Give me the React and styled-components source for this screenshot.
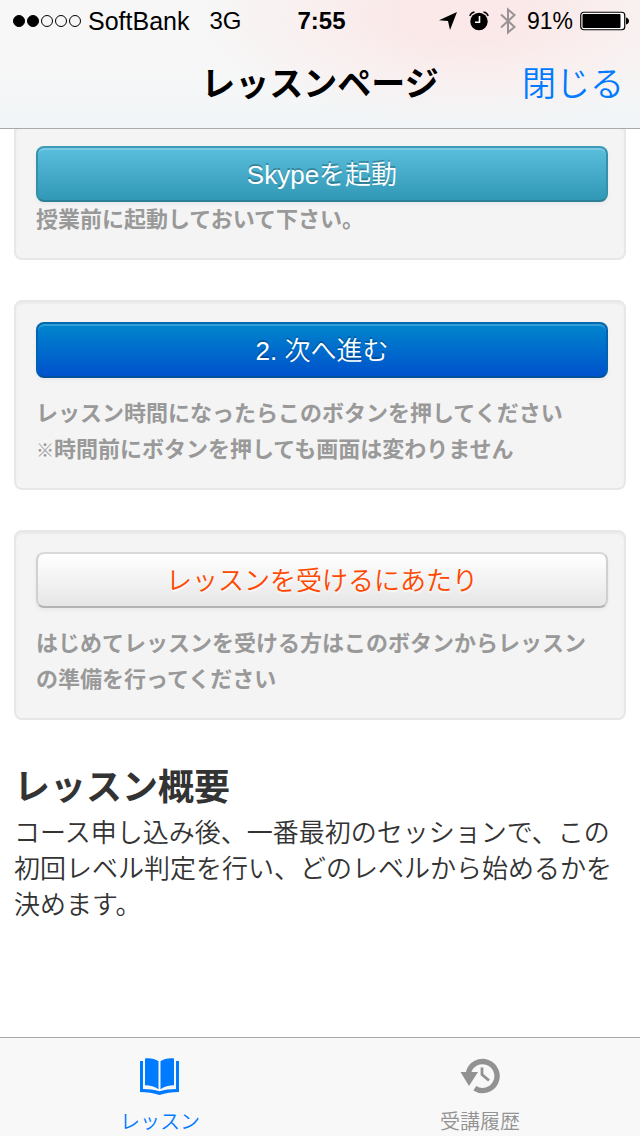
import React, { useState } from "react";
import styled, { createGlobalStyle, css } from "styled-components";

const TABS = [
  { id: "lesson", label: "レッスン", Icon: BookIcon },
  { id: "history", label: "受講履歴", Icon: HistoryIcon },
];

const SIGNAL = [true, true, false, false, false];

function BookIcon() {
  return (
    <svg width="40" height="38" viewBox="0 0 40 38" fill="currentColor" aria-hidden="true">
      <path d="M5 0.500C10 -0.300 15 1 18.500 3.200V31.200C15 28.700 10 27.200 5 27.200Z" />
      <path d="M34 0.500C29 -0.300 24 1 20.500 3.200V31.200C24 28.700 29 27.200 34 27.200Z" />
      <path d="M0 3H3V31C9 31 14.500 31.700 19.500 33.200C24.500 31.700 30 31 36 31V3H39V34C32 34 25.500 35 19.500 37C13.500 35 7 34 0 34Z" />
    </svg>
  );
}

function HistoryIcon() {
  return (
    <svg width="40" height="38" viewBox="0 0 40 38" fill="none" stroke="currentColor" aria-hidden="true">
      <path d="M8.500 14.500A14.500 14.500 0 1 1 14.800 30.300" strokeWidth="5.400" />
      <path d="M0.500 14H18L9 28Z" fill="currentColor" stroke="none" />
      <path d="M22 9.500V16.500L29 22.500" strokeWidth="2.800" />
    </svg>
  );
}

const App = () => {
  const [tab, setTab] = useState("lesson");
  return (
    <Page lang="ja">
      <GlobalStyle />
      <Header>
        <StatusBar>
          <StatusGroup>
            <Signal>
              {SIGNAL.map((on, i) => (
                <Dot key={i} $on={on} />
              ))}
            </Signal>
            <Carrier>SoftBank</Carrier>
            <span>3G</span>
          </StatusGroup>
          <Time>7:55</Time>
          <StatusIcons>
            <svg width="20" height="20" viewBox="0 0 20 20" aria-hidden="true">
              <path d="M19 1L12 19L10 10L1 9.300Z" />
            </svg>
            <svg width="20" height="20" viewBox="0 0 20 20" aria-hidden="true">
              <circle cx="10" cy="10.500" r="8.700" />
              <path d="M0.800 5Q1.800 1.700 5.500 1M19.200 5Q18.200 1.700 14.500 1" fill="none" stroke="#000" strokeWidth="1.300" />
              <path d="M10.500 5V11.300H6" fill="none" stroke="#fff" strokeWidth="1.600" />
            </svg>
            <svg width="16" height="28" viewBox="0 0 16 28" fill="none" stroke="#999294" strokeWidth="2" aria-hidden="true">
              <path d="M1 7.500L14.500 20L8 25.500V2.500L14.500 8L1 20.500" />
            </svg>
            <Percent>91%</Percent>
            <svg width="50" height="20" viewBox="0 0 50 20" aria-hidden="true">
              <rect x="0.750" y="1.250" width="44" height="17.500" rx="3" fill="#fff" stroke="#000" strokeWidth="1.200" />
              <rect x="2.500" y="3" width="38" height="14" rx="1" />
              <path d="M46 6.500Q49 7.500 49 10Q49 12.500 46 13.500Z" />
            </svg>
          </StatusIcons>
        </StatusBar>
        <NavBar>
          <Title>レッスンページ</Title>
          <CloseButton type="button">閉じる</CloseButton>
        </NavBar>
      </Header>
      <Content>
        <Card>
          <ActionButton type="button" $variant="info">Skypeを起動</ActionButton>
          <Note>授業前に起動しておいて下さい。</Note>
        </Card>
        <Card>
          <ActionButton type="button" $variant="primary">2. 次へ進む</ActionButton>
          <Note $spaced>
            レッスン時間になったらこのボタンを押してください
            <br />
            <Mark>※</Mark>時間前にボタンを押しても画面は変わりません
          </Note>
        </Card>
        <Card>
          <ActionButton type="button" $variant="plain">レッスンを受けるにあたり</ActionButton>
          <Note $spaced>はじめてレッスンを受ける方はこのボタンからレッスンの準備を行ってください</Note>
        </Card>
        <section>
          <Heading>レッスン概要</Heading>
          <Description>
            コース申し込み後、一番最初のセッションで、この初回レベル判定を行い、どのレベルから始めるかを決めます。
          </Description>
        </section>
      </Content>
      <TabBar>
        {TABS.map(({ id, label, Icon }) => (
          <Tab key={id} type="button" $active={tab === id} onClick={() => setTab(id)}>
            <Icon />
            <TabLabel>{label}</TabLabel>
          </Tab>
        ))}
      </TabBar>
    </Page>
  );
};

const GlobalStyle = createGlobalStyle`
  * {
    box-sizing: border-box;
  }

  body {
    margin: 0;
    background: #fff;
  }

  body,
  button {
    font-family: "Liberation Sans", "Noto Sans CJK JP", sans-serif;
    font-weight: 350;
  }
`;

const Page = styled.div`
  min-height: 100vh;
  display: flex;
  flex-direction: column;
  color: #333;
`;

const Header = styled.header`
  position: sticky;
  top: 0;
  z-index: 1;
  color: #000;
  border-bottom: 1px solid #a9a9ab;
  background:
    radial-gradient(ellipse 42% 85% at 73% 12%, #fbe8e8 20%, rgba(251, 232, 232, 0) 100%),
    linear-gradient(#f7f7f7 50%, #f1f5f7);
`;

const StatusBar = styled.div`
  height: 42px;
  padding: 0 10px 0 13px;
  display: grid;
  grid-template-columns: 1fr auto 1fr;
  align-items: center;
  font-size: 24px;
  font-weight: 400;
`;

const StatusGroup = styled.div`
  display: flex;
  align-items: center;
  gap: 20px;
`;

const Signal = styled.div`
  display: flex;
  gap: 2px;
  margin-right: -13px;
`;

const Dot = styled.span`
  width: 12px;
  height: 12px;
  border: 1px solid #000;
  border-radius: 50%;
  background: ${(props) => (props.$on ? "#000" : "transparent")};
`;

const Carrier = styled.span`
  font-size: 25px;
`;

const Time = styled.time`
  font-weight: 700;
`;

const StatusIcons = styled.div`
  display: flex;
  align-items: center;
  justify-content: flex-end;
  gap: 11px;
`;

const Percent = styled.span`
  margin-right: -4px;
  font-size: 23px;
`;

const NavBar = styled.div`
  height: 86px;
  padding: 0 16px 2px;
  display: grid;
  grid-template-columns: 1fr auto 1fr;
  align-items: center;
`;

const Title = styled.h1`
  grid-column: 2;
  margin: 0;
  font-size: 34px;
  font-weight: 700;
  line-height: 40px;
`;

const CloseButton = styled.button`
  justify-self: end;
  padding: 0;
  border: none;
  background: none;
  color: #007aff;
  font-size: 34px;
  line-height: 40px;
  cursor: pointer;
`;

const Content = styled.main`
  flex: 1;
  margin-top: -5px;
  padding: 0 14px 40px;
  display: flex;
  flex-direction: column;
  gap: 40px;
`;

const Card = styled.section`
  padding: 20px 16px 20px 20px;
  border: 2px solid #e7e7e7;
  border-radius: 8px;
  background: #f4f4f4;
  box-shadow: inset 0 2px 2px rgba(0, 0, 0, 0.04);
`;

const variants = {
  info: css`
    color: #fff;
    background: linear-gradient(#5bc0de, #2f96b4) border-box;
    text-shadow: 0 -2px 0 rgba(0, 0, 0, 0.25);
    border-color: #3f9ab5 #3590ac #2c7f97;
    box-shadow: inset 0 2px 0 rgba(255, 255, 255, 0.2), 0 2px 4px rgba(0, 0, 0, 0.05);
  `,
  primary: css`
    color: #fff;
    background: linear-gradient(#0088cc, #0050cc) border-box;
    text-shadow: 0 -2px 0 rgba(0, 0, 0, 0.25);
    border-color: #0068ae #0062b4 #00509a;
    box-shadow: inset 0 2px 0 rgba(255, 255, 255, 0.2), 0 2px 4px rgba(0, 0, 0, 0.05);
  `,
  plain: css`
    color: #ff4800;
    background: linear-gradient(#fff, #e6e6e6);
    text-shadow: 0 2px 2px rgba(255, 255, 255, 0.75);
    border-color: #d9d9d9 #d0d0d0 #b3b3b3;
    box-shadow: 0 2px 4px rgba(0, 0, 0, 0.05);
  `,
};

const ActionButton = styled.button`
  display: block;
  width: 100%;
  height: 56px;
  padding: 2px 0 0;
  border: 2px solid;
  border-radius: 8px;
  font-size: 26px;
  line-height: 36px;
  cursor: pointer;
  ${(props) => variants[props.$variant]}
`;

const Note = styled.p`
  margin: ${(props) => (props.$spaced ? "18px" : "0")} 0 0;
  padding-right: 4px;
  color: #999;
  font-size: 22px;
  font-weight: 700;
  line-height: 36px;
`;

const Mark = styled.span`
  font-family: "Noto Sans CJK JP", sans-serif;
  font-size: 18px;
  font-weight: 900;
  line-height: 1;
`;

const Heading = styled.h2`
  margin: 0;
  padding-top: 1px;
  font-size: 36px;
  font-weight: 700;
  line-height: 54px;
`;

const Description = styled.p`
  margin: 0;
  font-size: 26px;
  line-height: 36px;
`;

const TabBar = styled.nav`
  position: sticky;
  bottom: 0;
  display: flex;
  border-top: 1px solid #a9a9ab;
  background: #f8f8f8;
`;

const Tab = styled.button`
  flex: 1;
  padding: 20px 0 0;
  display: flex;
  flex-direction: column;
  align-items: center;
  gap: 12px;
  border: none;
  background: none;
  color: ${(props) => (props.$active ? "#007aff" : "#929292")};
  cursor: pointer;
`;

const TabLabel = styled.span`
  font-size: 20px;
  line-height: 28px;
`;

export default App;
